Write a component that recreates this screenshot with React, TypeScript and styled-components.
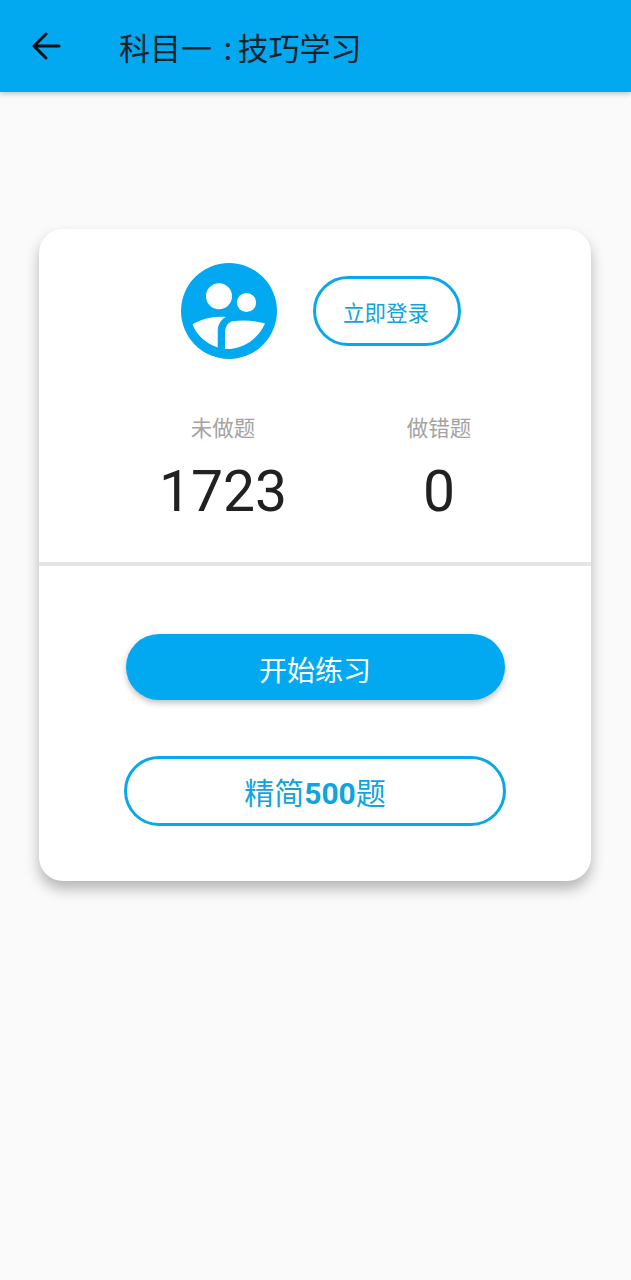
import React from "react";
import styled, { createGlobalStyle } from "styled-components";

const Global = createGlobalStyle`
  html, body { margin: 0; padding: 0; background: #fafafa; }
  body { font-family: Roboto, "Noto Sans CJK SC", sans-serif; }
`;
const Page = styled.div`
  width: 631px; height: 1280px; background: #fafafa; overflow: hidden;
  display: flex; flex-direction: column;
`;
const Header = styled.header`
  width: 100%; height: 92px; flex: none; background: #02a9f0;
  display: flex; align-items: center; padding: 8px 0 0 27px; box-sizing: border-box;
  box-shadow: 0 2px 5px rgba(0,0,0,.22);
`;
const BackIcon = styled.svg`width: 38px; height: 38px; flex: none; margin-top: -9px;`;
const Title = styled.h1`
  margin: 0 0 0 54px; font-size: 31px; font-weight: 400; color: #17222b; line-height: 40px; white-space: nowrap;
`;
const Colon = styled.span`margin: 0 -2px 0 4px; font-weight: 500;`;
const Card = styled.section`
  width: 552px; height: 652px; margin: 137px 0 0 39px; background: #fff; border-radius: 24px;
  box-shadow: 0 8px 14px rgba(0,0,0,.28); display: flex; flex-direction: column; box-sizing: border-box;
`;
const UserRow = styled.div`display: flex; align-items: center; gap: 36px; padding: 34px 0 0 142px;`;
const Avatar = styled.svg`width: 96px; height: 96px; flex: none;`;
const LoginButton = styled.button`
  width: 148px; height: 70px; box-sizing: border-box; border: 3px solid #0aa8e8; border-radius: 35px; background: #fff;
  color: #0ea5de; font: 400 21.5px Roboto, "Noto Sans CJK SC", sans-serif; padding: 0 2px 0 0;
`;
const Stats = styled.div`display: flex; padding: 54px 0 0 76px;`;
const Stat = styled.div`width: 216px; display: flex; flex-direction: column; align-items: center;`;
const StatLabel = styled.span`font-size: 21.5px; line-height: 32px; color: #a3a3a3;`;
const StatValue = styled.span`font-size: 57px; line-height: 66px; margin-top: 14px; color: #212121;`;
const Divider = styled.hr`width: 100%; height: 4px; margin: 37px 0 0; border: 0; background: #e5e5e5; flex: none;`;
const Actions = styled.div`display: flex; flex-direction: column; align-items: center; padding: 68px 0 0 0;`;
const StartButton = styled.button`
  width: 379px; height: 66px; border: 0; border-radius: 33px; background: #02a9f0; color: #fff; padding: 4px 0 0;
  font: 400 28px Roboto, "Noto Sans CJK SC", sans-serif; box-shadow: 0 3px 6px rgba(0,0,0,.25);
`;
const OutlineButton = styled.button`
  width: 382px; height: 70px; box-sizing: border-box; margin-top: 56px; border: 3px solid #0aa8e8; border-radius: 35px;
  background: #fff; color: #0ea5de; padding: 0; font: 400 30px Roboto, "Noto Sans CJK SC", sans-serif;
`;
const Strong = styled.b`font-weight: 700;`;

export default function App() {
  return (
    <Page>
      <Global />
      <Header>
        <BackIcon viewBox="0 0 38 38" fill="none" stroke="#0a0f14" strokeWidth="3" strokeLinecap="round" strokeLinejoin="round">
          <path d="M7 19H32M19 7L7 19L19 31" />
        </BackIcon>
        <Title>科目一 <Colon>:</Colon> 技巧学习</Title>
      </Header>
      <Card>
        <UserRow>
          <Avatar viewBox="0 0 96 96">
            <circle cx="48" cy="48" r="48" fill="#02a9f0" />
            <circle cx="38" cy="33.3" r="13" fill="#fff" />
            <circle cx="65.5" cy="39.5" r="9.6" fill="#fff" />
            <path fill="#fff" d="M11.5 61.5C20 56 32 53 44.7 54C39.5 57 36.7 62 36.7 68.3V84.5C25 80.5 16 72.5 11.5 61.5Z" />
            <path fill="#fff" d="M44 86V70C44 63.5 47 59.5 51.3 58.3C62 56.5 74 57.5 84 60.5C77 76 62 86.5 44 86Z" />
          </Avatar>
          <LoginButton>立即登录</LoginButton>
        </UserRow>
        <Stats>
          <Stat><StatLabel>未做题</StatLabel><StatValue>1723</StatValue></Stat>
          <Stat><StatLabel>做错题</StatLabel><StatValue>0</StatValue></Stat>
        </Stats>
        <Divider />
        <Actions>
          <StartButton>开始练习</StartButton>
          <OutlineButton>精简<Strong>500</Strong>题</OutlineButton>
        </Actions>
      </Card>
    </Page>
  );
}
